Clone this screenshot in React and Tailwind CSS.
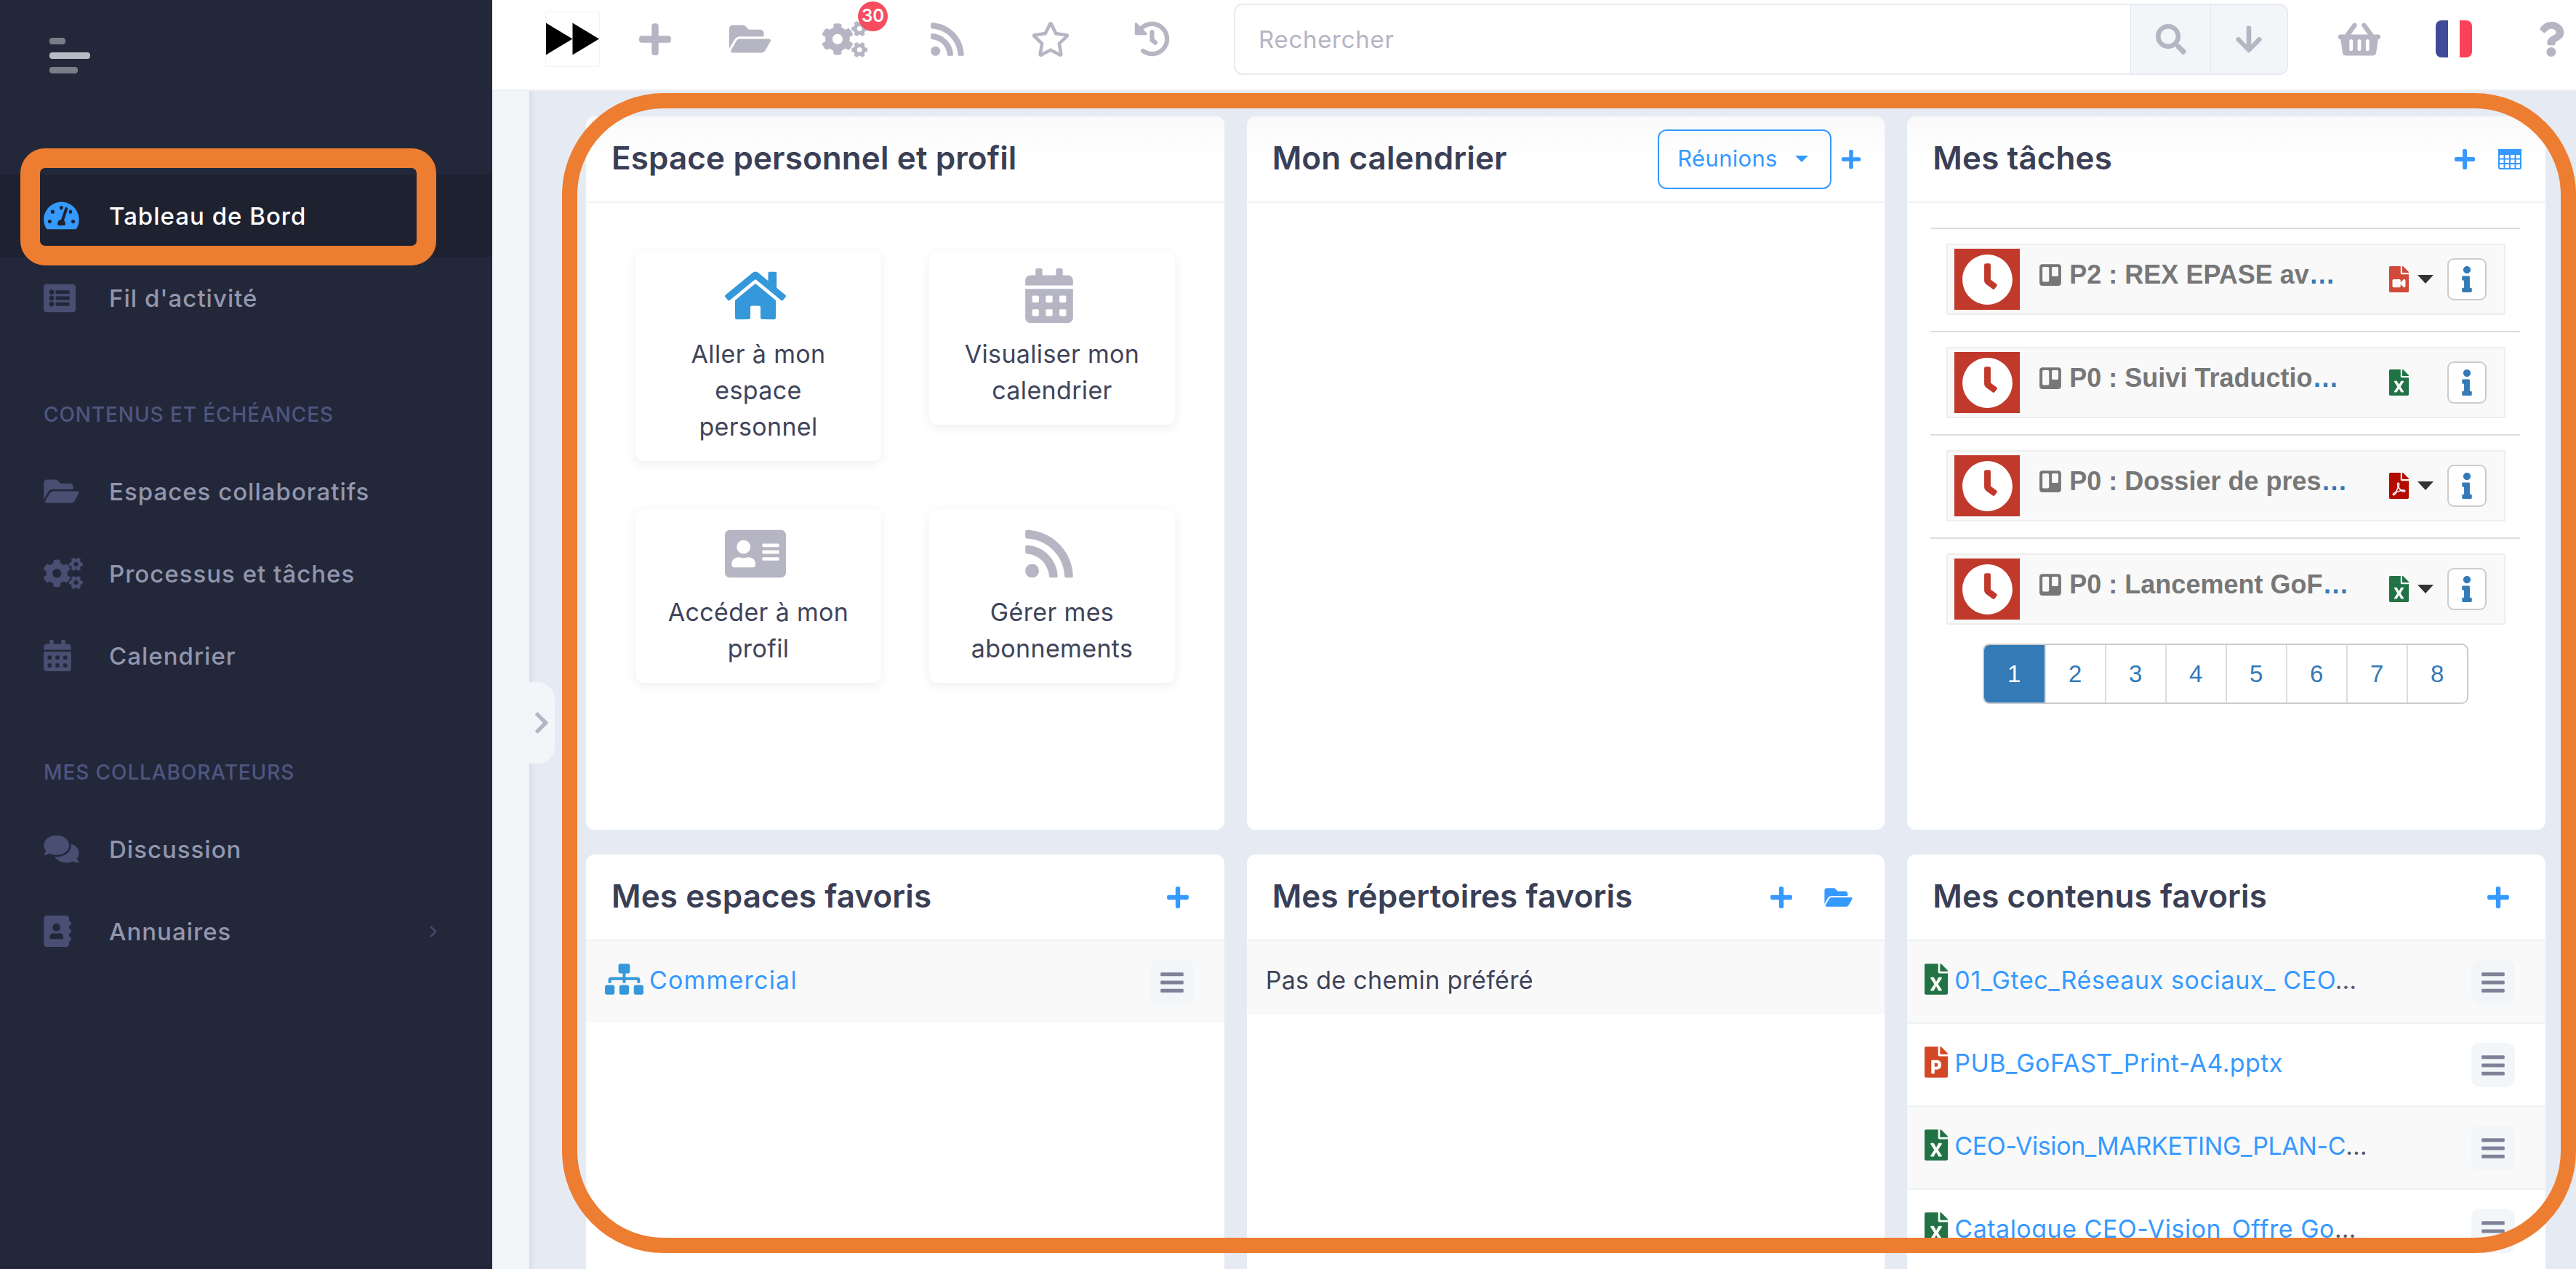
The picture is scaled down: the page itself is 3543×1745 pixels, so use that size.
import {
  FaTachometerAlt, FaListAlt, FaFolderOpen, FaCogs, FaCalendarAlt, FaComments, FaAddressBook,
  FaPlus, FaRss, FaRegStar, FaHistory, FaSearch, FaArrowDown, FaShoppingBasket, FaQuestion,
  FaHome, FaAddressCard, FaSitemap, FaFileExcel, FaFilePowerpoint, FaFilePdf, FaFileVideo,
  FaInfo, FaBars, FaTrello, FaClock, FaChevronRight,
} from "react-icons/fa";
import { ChevronRight } from "lucide-react";

function NavItem({ icon: Icon, iconClass, label, active, arrow }) {
  return (
    <div className={`h-[113px] flex items-center pl-[60px] pr-[68px] ${active ? "bg-[#1e2230]" : ""}`}>
      <div className="w-[90px] shrink-0">
        <Icon className={`${iconClass} ${active ? "text-[#3699ff]" : "text-[#494f72]"}`} />
      </div>
      <span className={`mt-[3px] text-[33px] font-medium tracking-[1px] ${active ? "text-white" : "text-[#9296ae]"}`}>{label}</span>
      {arrow && <ChevronRight className="ml-auto text-[#494f72]" size={26} strokeWidth={2} />}
    </div>
  );
}

function NavLabel({ children }) {
  return (
    <div className="h-[153px] flex items-end pl-[60px] pb-[29px]">
      <span className="text-[28px] leading-[40px] font-medium tracking-[0.9px] text-[#4f5680]">{children}</span>
    </div>
  );
}

function Sidebar() {
  return (
    <aside className="w-[677px] shrink-0 bg-[#222839] h-full">
      <div className="h-[240px] pt-[52px] pl-[68px] flex flex-col gap-[11px]">
        <div className="w-[22px] h-[9px] rounded bg-[#7a7d88]" />
        <div className="w-[56px] h-[9px] rounded bg-[#b9bbc4]" />
        <div className="w-[39px] h-[9px] rounded bg-[#7a7d88]" />
      </div>
      <NavItem icon={FaTachometerAlt} iconClass="w-[49px] h-[43px]" label="Tableau de Bord" active />
      <NavItem icon={FaListAlt} iconClass="w-[44px] h-[44px]" label="Fil d'activité" />
      <NavLabel>CONTENUS ET ÉCHÉANCES</NavLabel>
      <NavItem icon={FaFolderOpen} iconClass="w-[49px] h-[43px]" label="Espaces collaboratifs" />
      <NavItem icon={FaCogs} iconClass="w-[54px] h-[43px]" label="Processus et tâches" />
      <NavItem icon={FaCalendarAlt} iconClass="w-[38px] h-[43px]" label="Calendrier" />
      <NavLabel>MES COLLABORATEURS</NavLabel>
      <NavItem icon={FaComments} iconClass="w-[49px] h-[43px]" label="Discussion" />
      <NavItem icon={FaAddressBook} iconClass="w-[38px] h-[43px]" label="Annuaires" arrow />
    </aside>
  );
}

function TopBar() {
  return (
    <header className="h-[125px] bg-white border-b-2 border-[#eef0f4] pb-[16px] pl-[73px] flex items-center text-[#b5b5c3] shrink-0">
      <div className="w-[75px] h-[76px] border border-[#f3f3f3] flex items-center justify-center">
        <svg viewBox="0 0 75 45" className="w-[75px] h-[45px]">
          <polygon points="0,0 37.5,22.5 0,45" fill="#000" />
          <polygon points="37.5,0 75,22.5 37.5,45" fill="#000" />
        </svg>
      </div>
      <FaPlus className="ml-[54px] w-[44px] h-[50px]" />
      <FaFolderOpen className="ml-[80px] w-[57px] h-[51px]" />
      <div className="ml-[71px] relative w-[62px] h-[50px]">
        <FaCogs className="w-[62px] h-[50px]" />
        <div className="absolute left-[49px] -top-[27px] w-[41px] h-[41px] rounded-full bg-[#f64e60] text-white text-[24px] font-semibold flex items-center justify-center">
          30
        </div>
      </div>
      <FaRss className="ml-[87px] w-[46px] h-[52px]" />
      <FaRegStar className="ml-[92px] w-[54px] h-[48px]" />
      <FaHistory className="ml-[88px] w-[49px] h-[49px]" />
      <div className="ml-[88px] w-[1450px] h-[98px] border-2 border-[#e8eaf1] rounded-[12px] flex overflow-hidden">
        <div className="flex-1 pl-[32px] pt-[3px] flex items-center text-[33px] tracking-[0.7px] text-[#b5b5c3]">Rechercher</div>
        <div className="w-[110px] bg-[#f3f6f9] border-l border-[#e4e6ef] flex items-center justify-center">
          <FaSearch className="w-[42px] h-[42px]" />
        </div>
        <div className="w-[105px] bg-[#f3f6f9] border-l border-[#e4e6ef] flex items-center justify-center">
          <FaArrowDown className="w-[38px] h-[42px]" />
        </div>
      </div>
      <FaShoppingBasket className="ml-[69px] w-[58px] h-[52px]" />
      <div className="ml-[76px] w-[50px] h-[51px] rounded-[8px] overflow-hidden flex">
        <div className="flex-1 bg-[#3f4a9a]" />
        <div className="flex-1 bg-white" />
        <div className="flex-1 bg-[#f9425a]" />
      </div>
      <FaQuestion className="ml-[91px] w-[36px] h-[48px]" />
    </header>
  );
}

function Card({ title, actions, tall, children, gradient }) {
  return (
    <section className={`bg-white rounded-[12px] overflow-hidden ${tall ? "h-[981px]" : "h-[600px]"}`}>
      <div className={`h-[119px] border-b-2 border-[#eff2f5] pl-[35px] pr-[40px] flex items-center justify-between ${gradient ? "bg-gradient-to-b from-[#f9f9f9] to-white to-50%" : ""}`}>
        <h2 className="pb-[4px] text-[44px] font-semibold text-[#3a3f56] tracking-[0.1px]">{title}</h2>
        {actions}
      </div>
      {children}
    </section>
  );
}

const BluePlus = ({ className }) => <FaPlus className={`w-[30px] h-[34px] text-[#3699ff] ${className}`} />;

function GridIcon() {
  return (
    <svg viewBox="0 0 32 28" className="w-[32px] h-[28px]" fill="none" stroke="#3699ff" strokeWidth="2">
      <rect x="1" y="1" width="30" height="26" rx="2" />
      <rect x="1" y="1" width="30" height="6" fill="#3699ff" />
      <path d="M1 13.5h30M1 20h30M8.5 7v20M16 7v20M23.5 7v20" />
    </svg>
  );
}

function Shortcut({ icon: Icon, iconClass, lines }) {
  return (
    <div className="bg-white rounded-[12px] shadow-[0_4px_14px_rgba(60,70,100,0.09)] pt-[24px] pb-[22px] flex flex-col items-center self-start">
      <Icon className={`h-[75px] -ml-[8px] ${iconClass}`} />
      <div className="mt-[16px] pt-[2px] h-auto text-[34px] leading-[50px] tracking-[0.35px] text-[#40445a] text-center whitespace-nowrap">
        {lines.map((line) => (
          <div key={line}>{line}</div>
        ))}
      </div>
    </div>
  );
}

function ProfileCard() {
  return (
    <Card title="Espace personnel et profil" tall gradient>
      <div className="pl-[68px] pt-[66px] grid grid-cols-[338px_338px] gap-x-[66px] gap-y-[66px]">
        <Shortcut icon={FaHome} iconClass="w-[84px] text-[#3498db]" lines={["Aller à mon", "espace", "personnel"]} />
        <Shortcut icon={FaCalendarAlt} iconClass="w-[66px] text-[#b5b5c3]" lines={["Visualiser mon", "calendrier"]} />
        <Shortcut icon={FaAddressCard} iconClass="w-[84px] text-[#b5b5c3]" lines={["Accéder à mon", "profil"]} />
        <Shortcut icon={FaRss} iconClass="w-[66px] text-[#b5b5c3]" lines={["Gérer mes", "abonnements"]} />
      </div>
    </Card>
  );
}

function CalendarCard() {
  return (
    <Card
      title="Mon calendrier"
      tall
      gradient
      actions={
        <div className="flex items-center -mr-[8px]">
          <div className="w-[239px] h-[82px] border-2 border-[#3699ff] rounded-[12px] pl-[25px] flex items-center text-[#3699ff] text-[31px] tracking-[0.3px]">
            Réunions
            <svg viewBox="0 0 18 9" className="ml-[24px] w-[18px] h-[9px]">
              <polygon points="0,0 18,0 9,9" fill="#3699ff" />
            </svg>
          </div>
          <FaPlus className="ml-[13px] w-[28px] h-[30px] text-[#3699ff]" />
        </div>
      }
    />
  );
}

const tasks = [
  { label: "P2 : REX EPASE av", icon: FaFileVideo, color: "text-[#d0493a]", caret: true },
  { label: "P0 : Suivi Traductio", icon: FaFileExcel, color: "text-[#217346]" },
  { label: "P0 : Dossier de pres", icon: FaFilePdf, color: "text-[#b30b00]", caret: true },
  { label: "P0 : Lancement GoF", icon: FaFileExcel, color: "text-[#217346]", caret: true },
];

function TaskRow({ task }) {
  const Icon = task.icon;
  return (
    <div className="border-t-2 border-[#dddddd] pt-[20px] pb-[22px] px-[22px] pr-[20px]">
      <div className="h-[98px] bg-[#f9f9f9] border-2 border-[#eeeeee] flex items-center pl-[9px] font-[family-name:'Liberation_Sans',sans-serif]">
        <div className="w-[90px] h-[84px] bg-[#c0392b] flex items-center justify-center shrink-0">
          <FaClock className="w-[71px] h-[71px] text-white" />
        </div>
        <div className="ml-[27px] w-[481px] shrink-0 flex items-center gap-[11px] -mt-[12px]">
          <FaTrello className="w-[30px] h-[34px] text-[#777777]" />
          <span className="text-[36px] font-bold text-[#777777] whitespace-nowrap">
            {task.label}
            <span className="text-[#337ab7]">…</span>
          </span>
        </div>
        <Icon className={`w-[27px] h-[36px] ${task.color}`} />
        <div className="ml-[12px] w-[22px] h-[12px]">
          {task.caret && (
            <svg viewBox="0 0 22 12" className="w-[22px] h-[12px]">
              <polygon points="0,0 22,0 11,12" fill="#333333" />
            </svg>
          )}
        </div>
        <div className="ml-[19px] w-[54px] h-[58px] bg-white border-2 border-[#cccccc] rounded-[9px] flex items-center justify-center">
          <FaInfo className="w-[16px] h-[36px] text-[#337ab7]" />
        </div>
      </div>
    </div>
  );
}

function TasksCard() {
  return (
    <Card
      title="Mes tâches"
      tall
      gradient
      actions={
        <div className="flex items-center gap-[32px] -mr-[7px]">
          <FaPlus className="w-[28px] h-[32px] text-[#3699ff]" />
          <GridIcon />
        </div>
      }
    >
      <div className="ml-[32px] mr-[35px] mt-[34px]">
        {tasks.map((task) => (
          <TaskRow key={task.label} task={task} />
        ))}
        <div className="flex justify-center mt-[4px] font-[family-name:'Liberation_Sans',sans-serif]">
          <div className="flex h-[83px] border-2 border-[#cccccc] rounded-[9px] overflow-hidden text-[33px]">
            {[1, 2, 3, 4, 5, 6, 7, 8].map((n) => (
              <div
                key={n}
                className={`w-[83px] flex items-center justify-center ${n === 1 ? "bg-[#337ab7] text-white" : "text-[#337ab7] border-l-2 border-[#dddddd]"}`}
              >
                {n}
              </div>
            ))}
          </div>
        </div>
      </div>
    </Card>
  );
}

function MenuButton() {
  return (
    <div className="w-[60px] h-[61px] bg-[#f3f6f9] rounded-[12px] flex items-center justify-center shrink-0">
      <FaBars className="w-[32px] h-[36px] text-[#7e8299]" />
    </div>
  );
}

function SpacesCard() {
  return (
    <Card title="Mes espaces favoris" actions={<BluePlus className="mr-[9px]" />}>
      <div className="h-[112px] bg-[#f9f9f9] pl-[26px] pr-[42px] pt-[26px] flex items-start justify-between">
        <div className="flex items-center">
          <FaSitemap className="w-[53px] h-[43px] text-[#3498db]" />
          <span className="ml-[8px] pt-[2px] text-[34px] tracking-[1.2px] text-[#3699ff]">Commercial</span>
        </div>
        <MenuButton />
      </div>
    </Card>
  );
}

function FoldersCard() {
  return (
    <Card
      title="Mes répertoires favoris"
      actions={
        <div className="flex items-center gap-[44px] mr-[4px]">
          <BluePlus />
          <FaFolderOpen className="w-[39px] h-[34px] text-[#3699ff]" />
        </div>
      }
    >
      <div className="h-[101px] bg-[#f9f9f9] pl-[26px] pt-[28px] text-[34px] tracking-[0.3px] text-[#40445a]">Pas de chemin préféré</div>
    </Card>
  );
}

const contents = [
  { name: "01_Gtec_Réseaux sociaux_ CEO", icon: FaFileExcel, color: "text-[#217346]", track: "tracking-[0.6px]", dots: true },
  { name: "PUB_GoFAST_Print-A4.pptx", icon: FaFilePowerpoint, color: "text-[#d24726]", track: "tracking-[0.4px]" },
  { name: "CEO-Vision_MARKETING_PLAN-C", icon: FaFileExcel, color: "text-[#217346]", track: "tracking-[-0.4px]", dots: true },
  { name: "Catalogue CEO-Vision_Offre Go", icon: FaFileExcel, color: "text-[#217346]", track: "tracking-[0.5px]", dots: true },
];

function ContentsCard() {
  return (
    <Card title="Mes contenus favoris" actions={<BluePlus className="mr-[10px]" />}>
      {contents.map((item, i) => {
        const Icon = item.icon;
        return (
          <div
            key={item.name}
            className={`h-[114px] border-b-2 border-[#eff2f5] pl-[24px] pr-[42px] pt-[26px] flex items-start justify-between ${i % 2 === 0 ? "bg-[#f9f9f9]" : "bg-white"}`}
          >
            <div className="flex items-center">
              <Icon className={`w-[32px] h-[43px] ${item.color}`} />
              <span className={`ml-[9px] pt-[2px] text-[34px] text-[#3699ff] whitespace-nowrap ${item.track}`}>
                {item.name}
                {item.dots && <span className="text-[#5a5d70]">…</span>}
              </span>
            </div>
            <MenuButton />
          </div>
        );
      })}
    </Card>
  );
}

export default function App() {
  return (
    <div className="relative flex h-screen overflow-hidden font-[family-name:Inter,sans-serif]">
      <Sidebar />
      <main className="flex-1 flex flex-col min-w-0">
        <TopBar />
        <div className="flex flex-1 min-h-0">
          <div className="relative w-[51px] shrink-0 bg-[#f3f6f9]">
            <div className="absolute left-[51px] top-[813px] w-[35px] h-[112px] bg-[#f3f6f9] rounded-r-[24px] flex items-center z-10">
              <FaChevronRight className="ml-[6px] w-[22px] h-[34px] text-[#b5b5c3]" />
            </div>
          </div>
          <div className="flex-1 bg-[#e6ebf3] pl-[78px] pr-[42px] pt-[35px] shadow-[inset_8px_0_8px_-6px_rgba(0,0,0,0.08)] overflow-hidden">
            <div className="grid grid-cols-3 gap-x-[31px] gap-y-[34px]">
              <ProfileCard />
              <CalendarCard />
              <TasksCard />
              <SpacesCard />
              <FoldersCard />
              <ContentsCard />
            </div>
          </div>
        </div>
      </main>
      {/* annotation frames drawn over the screenshot */}
      <div className="absolute left-[28px] top-[204px] w-[572px] h-[161px] border-[27px] border-[#ed7d31] rounded-[34px] pointer-events-none" />
      <div className="absolute left-[773px] top-[128px] w-[2770px] h-[1595px] border-[21px] border-[#ed7d31] rounded-[140px] pointer-events-none" />
    </div>
  );
}
